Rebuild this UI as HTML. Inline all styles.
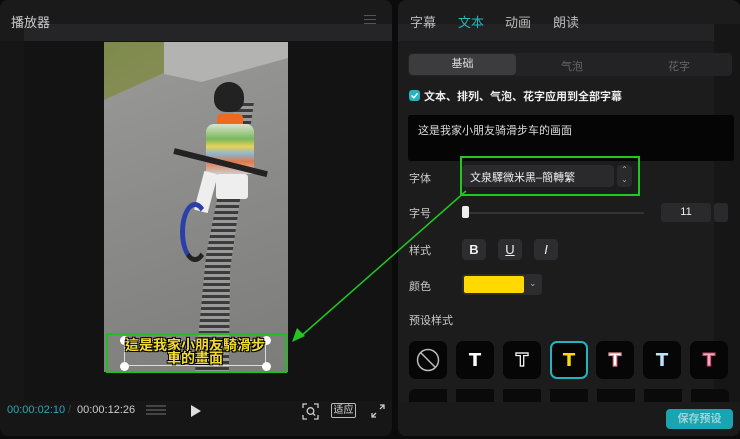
<!DOCTYPE html>
<html><head><meta charset="utf-8"><style>
*{margin:0;padding:0;box-sizing:border-box}
body{width:740px;height:439px;background:#0b0b0b;font-family:"Liberation Sans","Noto Sans CJK SC",sans-serif;position:relative;overflow:hidden;color:#ddd}
.a{position:absolute}
.lp{left:0;top:0;width:392px;height:436px;background:#161616;border-radius:8px;overflow:hidden}
.rp{left:398px;top:0;width:342px;height:436px;background:#1c1c1c;border-radius:8px;overflow:hidden}
.t{font-size:12px;white-space:nowrap}
.sq{width:38px;height:38px;background:#060606;border-radius:7px;display:flex;align-items:center;justify-content:center;font-weight:bold;font-size:18px;font-family:"DejaVu Sans",sans-serif}
.btn{width:24px;height:21px;background:#2d2d2f;border-radius:4px;display:flex;align-items:center;justify-content:center;font-size:13px;color:#eee}
</style></head><body>
<div class="a lp">
  <div class="a" style="left:0;top:0;width:392px;height:41px;background:#1a1a1b"></div>
  <div class="a" style="left:24px;top:24px;width:368px;height:17px;background:#252527"></div>
  <div class="a t" style="left:11px;top:12px;font-size:13px;color:#ccc">播放器</div>
  <div class="a" style="left:364px;top:15px;width:12px;height:1px;background:#555;box-shadow:0 4px 0 #555,0 8px 0 #555"></div>
  <div class="a" style="left:24px;top:41px;width:368px;height:360px;background:#131313"></div>
  <!-- video -->
  <div class="a" style="left:104px;top:42px;width:184px;height:330px;background:linear-gradient(160deg,#9a9a98,#8a8a88 50%,#7c7c7a);overflow:hidden">
    <div class="a" style="left:0;top:0;width:84px;height:58px;background:linear-gradient(150deg,#7d8a4a,#8a8e5c);clip-path:polygon(0 0,100% 0,95% 38%,0 100%)"></div>
    <div class="a" style="left:60px;top:0;width:124px;height:40px;background:#b3b3b1;clip-path:polygon(0 0,100% 0,100% 40%,30% 100%,0 80%)"></div>
    <div class="a" style="left:90px;top:60px;width:60px;height:280px;background:repeating-linear-gradient(0deg,#3b3b3b 0 3px,#9a9a9a 3px 6px);clip-path:polygon(70% 0,100% 0,60% 60%,58% 100%,0 100%,20% 55%)"></div>
    <div class="a" style="left:110px;top:40px;width:30px;height:30px;background:#222;border-radius:50% 50% 40% 40%"></div>
    <div class="a" style="left:113px;top:72px;width:26px;height:14px;background:#f06a1e;border-radius:4px"></div>
    <div class="a" style="left:102px;top:82px;width:48px;height:50px;background:linear-gradient(180deg,#d9e3d0,#7ab85a 30%,#e8d25a 45%,#8cb5cf 60%,#e07a4a 75%,#ccc);border-radius:8px 8px 2px 2px"></div>
    <div class="a" style="left:70px;top:106px;width:96px;height:6px;background:#222;transform:rotate(14deg);transform-origin:left"></div>
    <div class="a" style="left:112px;top:132px;width:32px;height:25px;background:#eee;border-radius:3px"></div>
    <div class="a" style="left:95px;top:130px;width:14px;height:40px;background:#eee;transform:rotate(15deg)"></div>
    <div class="a" style="left:76px;top:160px;width:30px;height:60px;border:5px solid #2a3fa8;border-radius:50%;border-right-color:transparent;border-bottom-color:#222"></div>
  </div>
  <div class="a" style="left:106px;top:333px;width:181px;height:40px;border:2px solid #1fbf1f"></div>
  <div class="a" style="left:124px;top:340px;width:142px;height:26px;border:1px solid #ddd"></div>
  <div class="a" style="left:120px;top:336px;width:9px;height:9px;border-radius:50%;background:#fff;box-shadow:142px 0 #fff,0 26px #fff,142px 26px #fff"></div>
  <div class="a" style="left:124px;top:339px;width:142px;text-align:center;font-size:14px;line-height:13px;color:#f3dd2c;font-weight:bold;text-shadow:0 0 1px #000,1px 1px 0 #000,-1px -1px 0 #000,1px -1px 0 #000,-1px 1px 0 #000;font-family:'Noto Sans CJK TC',sans-serif">這是我家小朋友騎滑步<br>車的畫面</div>
  <div class="a t" style="left:7px;top:404px;font-size:11px;color:#2aa7b5">00:00:02:10</div>
  <div class="a t" style="left:68px;top:404px;font-size:11px;color:#444">/</div>
  <div class="a t" style="left:77px;top:404px;font-size:11px;color:#ccc">00:00:12:26</div>
  <div class="a" style="left:146px;top:405px;width:20px;height:12px;background:repeating-linear-gradient(180deg,#444 0 2px,transparent 2px 4px)"></div>
  <svg class="a" style="left:190px;top:404px" width="12" height="14"><path d="M1 1L11 7L1 13Z" fill="#ddd"/></svg>
  <svg class="a" style="left:302px;top:403px" width="17" height="17" fill="none" stroke="#ccc" stroke-width="1.3"><path d="M1 5V1H5M12 1H16V5M16 12V16H12M5 16H1V12"/><circle cx="8.5" cy="8" r="3.3"/><path d="M11 10.5L13 12.5"/></svg>
  <div class="a" style="left:331px;top:403px;width:25px;height:15px;border:1px solid #bbb;border-radius:2px;font-size:10px;text-align:center;line-height:13px;color:#ddd">适应</div>
  <svg class="a" style="left:371px;top:404px" width="14" height="14" fill="none" stroke="#ccc" stroke-width="1.3"><path d="M9 1H13V5M13 1L9 5M5 13H1V9M1 13L5 9"/></svg>
</div>
<div class="a rp">
  <div class="a" style="left:0;top:24px;width:316px;height:17px;background:#232325"></div>
  <div class="a" style="left:316px;top:24px;width:26px;height:380px;background:#161616"></div>
  <div class="a t" style="left:12px;top:12px;font-size:13px;color:#bbb">字幕</div>
  <div class="a t" style="left:60px;top:12px;font-size:13px;color:#2bb3c0">文本</div>
  <div class="a t" style="left:107px;top:12px;font-size:13px;color:#bbb">动画</div>
  <div class="a t" style="left:155px;top:12px;font-size:13px;color:#bbb">朗读</div>
  <div class="a" style="left:10px;top:53px;width:324px;height:23px;background:#232325;border-radius:4px"></div>
  <div class="a" style="left:11px;top:54px;width:107px;height:21px;background:#3c3c3f;border-radius:4px;text-align:center;line-height:21px;font-size:11px;color:#ddd">基础</div>
  <div class="a t" style="left:163px;top:58px;font-size:11px;color:#666">气泡</div>
  <div class="a t" style="left:270px;top:58px;font-size:11px;color:#666">花字</div>
  <div class="a" style="left:11px;top:90px;width:11px;height:11px;background:#25b3c0;border-radius:3px"></div>
  <svg class="a" style="left:12px;top:91px" width="9" height="9"><path d="M1.5 4.5L3.8 6.8L7.5 2.5" stroke="#fff" stroke-width="1.5" fill="none"/></svg>
  <div class="a t" style="left:26px;top:88px;font-size:11px;font-weight:bold;color:#eee">文本、排列、气泡、花字应用到全部字幕</div>
  <div class="a" style="left:10px;top:115px;width:326px;height:46px;background:#050505;border-radius:3px"></div>
  <div class="a t" style="left:20px;top:122px;font-size:11px;color:#ddd">这是我家小朋友骑滑步车的画面</div>
  <div class="a t" style="left:11px;top:170px;font-size:11px;color:#ccc">字体</div>
  <div class="a" style="left:62px;top:156px;width:180px;height:40px;border:2px solid #22c722"></div>
  <div class="a" style="left:64px;top:165px;width:152px;height:22px;background:#2a2a2c;border-radius:4px"></div>
  <div class="a t" style="left:72px;top:169px;font-size:11px;color:#eee">文泉驛微米黑–簡轉繁</div>
  <div class="a" style="left:219px;top:165px;width:15px;height:22px;background:#2a2a2c;border-radius:4px;font-size:8px;color:#aaa;text-align:center;line-height:10px">⌃<br>⌄</div>
  <div class="a t" style="left:11px;top:205px;font-size:11px;color:#ccc">字号</div>
  <div class="a" style="left:68px;top:212px;width:178px;height:2px;background:#333"></div>
  <div class="a" style="left:64px;top:206px;width:7px;height:12px;background:#eee;border-radius:2px"></div>
  <div class="a" style="left:263px;top:203px;width:50px;height:19px;background:#2a2a2c;border-radius:3px;text-align:center;line-height:19px;font-size:11px;color:#eee">11</div>
  <div class="a" style="left:316px;top:203px;width:14px;height:19px;background:#2a2a2c;border-radius:3px"></div>
  <div class="a t" style="left:11px;top:242px;font-size:11px;color:#ccc">样式</div>
  <div class="a btn" style="left:64px;top:239px;font-weight:bold">B</div>
  <div class="a btn" style="left:100px;top:239px;text-decoration:underline">U</div>
  <div class="a btn" style="left:136px;top:239px;font-style:italic">I</div>
  <div class="a t" style="left:11px;top:278px;font-size:11px;color:#ccc">颜色</div>
  <div class="a" style="left:64px;top:274px;width:80px;height:21px;background:#2d2d2f;border-radius:4px"></div>
  <div class="a" style="left:66px;top:276px;width:60px;height:17px;background:#ffd900;border-radius:2px"></div>
  <div class="a t" style="left:131px;top:278px;font-size:9px;color:#aaa">⌄</div>
  <div class="a t" style="left:11px;top:312px;font-size:11px;color:#ccc">预设样式</div>
  <div class="a sq" style="left:11px;top:341px"><svg width="24" height="24"><circle cx="12" cy="12" r="10.5" stroke="#bbb" stroke-width="1.5" fill="none"/><path d="M4.5 4.5L19.5 19.5" stroke="#bbb" stroke-width="1.5"/></svg></div>
  <div class="a sq" style="left:58px;top:341px;color:#fff">T</div>
  <div class="a sq" style="left:105px;top:341px;color:#000;-webkit-text-stroke:1.2px #fff">T</div>
  <div class="a sq" style="left:152px;top:341px;color:#ffd900;border:2px solid #25b3c0">T</div>
  <div class="a sq" style="left:198px;top:341px;color:#fff;-webkit-text-stroke:1.2px #e88">T</div>
  <div class="a sq" style="left:245px;top:341px;color:#bfe3ff">T</div>
  <div class="a sq" style="left:292px;top:341px;color:#f7a8c0;-webkit-text-stroke:1px #c46">T</div>
  <div class="a" style="left:11px;top:389px;width:320px;height:14px;background:repeating-linear-gradient(90deg,#0a0a0a 0 38px,transparent 38px 47px);border-radius:6px 6px 0 0"></div>
  <div class="a" style="left:0;top:402px;width:342px;height:34px;background:#1a1a1b"></div>
  <div class="a" style="left:268px;top:409px;width:67px;height:20px;background:#1aa3b0;border-radius:4px;text-align:center;line-height:20px;font-size:11px;font-weight:bold;color:#9ad5db">保存预设</div>
</div>
<svg class="a" style="left:0;top:0" width="740" height="439"><path d="M466 191L300 337" stroke="#22c722" stroke-width="1.5"/><path d="M292 342L297 328L305 336Z" fill="#22c722"/></svg>
</body></html>
